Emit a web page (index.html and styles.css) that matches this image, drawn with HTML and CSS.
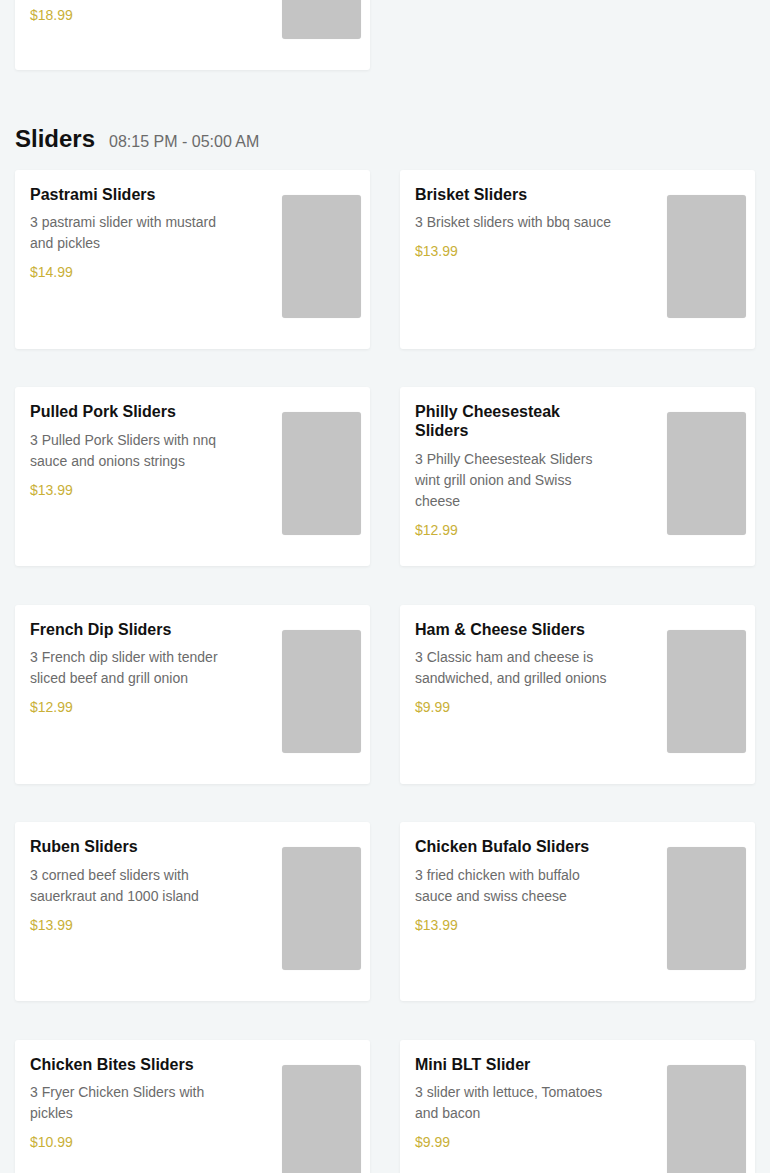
FILE: index.html
```html
<!DOCTYPE html>
<html lang="en">
<head>
<meta charset="utf-8">
<title>Menu</title>
<link rel="stylesheet" href="styles.css">
</head>
<body>
<div class="menu">
  <section class="section section-prev">
    <div class="grid">
      <div class="card">
        <div class="info">
          <h3 class="name">Steak Sandwich</h3>
          <p class="desc">Grilled steak with onions, peppers and melted cheese on a toasted roll</p>
          <p class="price">$18.99</p>
        </div>
        <div class="thumb"></div>
      </div>
    </div>
  </section>

  <section class="section">
    <div class="section-head">
      <h2 class="section-title">Sliders</h2>
      <span class="section-hours">08:15 PM - 05:00 AM</span>
    </div>
    <div class="grid">
      <div class="card">
        <div class="info">
          <h3 class="name">Pastrami Sliders</h3>
          <p class="desc">3 pastrami slider with mustard and pickles</p>
          <p class="price">$14.99</p>
        </div>
        <div class="thumb"></div>
      </div>
      <div class="card">
        <div class="info">
          <h3 class="name">Brisket Sliders</h3>
          <p class="desc">3 Brisket sliders with bbq sauce</p>
          <p class="price">$13.99</p>
        </div>
        <div class="thumb"></div>
      </div>
      <div class="card">
        <div class="info">
          <h3 class="name">Pulled Pork Sliders</h3>
          <p class="desc">3 Pulled Pork Sliders with nnq sauce and onions strings</p>
          <p class="price">$13.99</p>
        </div>
        <div class="thumb"></div>
      </div>
      <div class="card">
        <div class="info">
          <h3 class="name">Philly Cheesesteak Sliders</h3>
          <p class="desc">3 Philly Cheesesteak Sliders wint grill onion and Swiss cheese</p>
          <p class="price">$12.99</p>
        </div>
        <div class="thumb"></div>
      </div>
      <div class="card">
        <div class="info">
          <h3 class="name">French Dip Sliders</h3>
          <p class="desc">3 French dip slider with tender sliced beef and grill onion</p>
          <p class="price">$12.99</p>
        </div>
        <div class="thumb"></div>
      </div>
      <div class="card">
        <div class="info">
          <h3 class="name">Ham &amp; Cheese Sliders</h3>
          <p class="desc">3 Classic ham and cheese is sandwiched, and grilled onions</p>
          <p class="price">$9.99</p>
        </div>
        <div class="thumb"></div>
      </div>
      <div class="card">
        <div class="info">
          <h3 class="name">Ruben Sliders</h3>
          <p class="desc">3 corned beef sliders with sauerkraut and 1000 island</p>
          <p class="price">$13.99</p>
        </div>
        <div class="thumb"></div>
      </div>
      <div class="card">
        <div class="info">
          <h3 class="name">Chicken Bufalo Sliders</h3>
          <p class="desc">3 fried chicken with buffalo sauce and swiss cheese</p>
          <p class="price">$13.99</p>
        </div>
        <div class="thumb"></div>
      </div>
      <div class="card">
        <div class="info">
          <h3 class="name">Chicken Bites Sliders</h3>
          <p class="desc">3 Fryer Chicken Sliders with pickles</p>
          <p class="price">$10.99</p>
        </div>
        <div class="thumb"></div>
      </div>
      <div class="card">
        <div class="info">
          <h3 class="name">Mini BLT Slider</h3>
          <p class="desc">3 slider with lettuce, Tomatoes and bacon</p>
          <p class="price">$9.99</p>
        </div>
        <div class="thumb"></div>
      </div>
    </div>
  </section>
</div>
</body>
</html>
```
FILE: styles.css
```css
* {
  box-sizing: border-box;
}

html, body {
  margin: 0;
  padding: 0;
  background: #f3f6f7;
}

body {
  font-family: "Liberation Sans", Arial, sans-serif;
  color: #111;
  overflow: hidden;
}

.section-prev {
  margin-top: -109px;
}

.grid {
  display: grid;
  grid-template-columns: 355px 355px;
  column-gap: 30px;
  row-gap: 38.5px;
  padding: 0 15px;
}

.card {
  display: flex;
  align-items: flex-start;
  height: 179px;
  padding: 15px 9px 15px 15px;
  background: #fff;
  border-radius: 3px;
  box-shadow: 0 1px 3px rgba(0, 0, 0, 0.06);
}

.info {
  width: 200px;
}

.name {
  margin: 0;
  font-size: 16px;
  font-weight: 700;
  line-height: 19px;
  color: #111;
}

.desc {
  margin: 8.5px 0 0;
  font-size: 14px;
  line-height: 21px;
  color: #6b6b6b;
}

.price {
  margin: 8px 0 0;
  font-size: 14px;
  line-height: 21px;
  color: #c9b037;
}

.thumb {
  margin-left: auto;
  margin-top: 10px;
  width: 79px;
  height: 123px;
  border-radius: 3px;
  background: #c4c4c4;
  box-shadow: 0 0 1px rgba(0, 0, 0, 0.12);
}

.section-head {
  display: flex;
  align-items: baseline;
  gap: 14px;
  margin: 54.5px 15px 17px;
}

.section-title {
  margin: 0;
  font-size: 24px;
  line-height: 28px;
  font-weight: 700;
  color: #111;
}

.section-hours {
  font-size: 16px;
  color: #6b6b6b;
}
```
